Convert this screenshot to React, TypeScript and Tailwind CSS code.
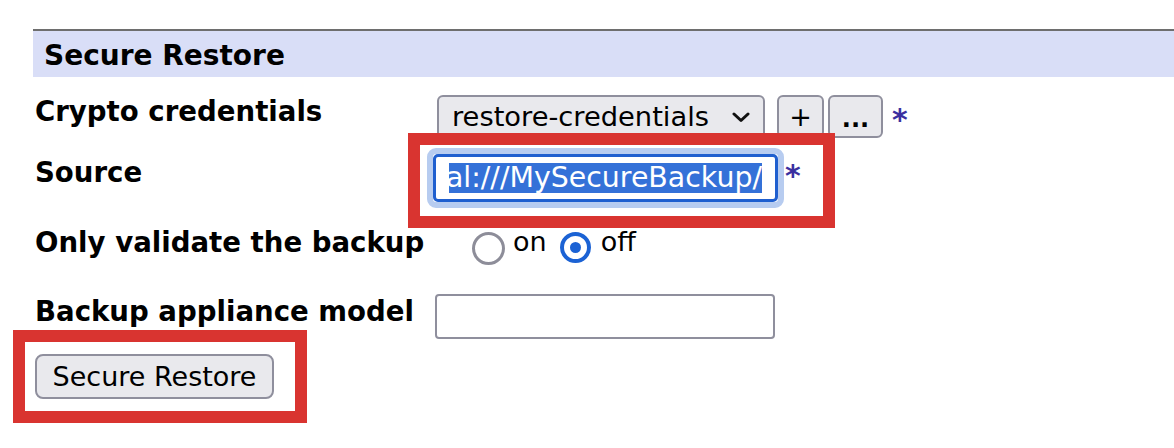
import React from "react";

function Chevron() {
  return (
    <svg width="18" height="11" viewBox="0 0 18 11" fill="none">
      <path d="M2 2 L9 8.5 L16 2" stroke="#111" strokeWidth="3" strokeLinecap="round" strokeLinejoin="round" />
    </svg>
  );
}

export default function App() {
  return (
    <div className="relative w-[1174px] h-[448px] overflow-hidden bg-white font-['DejaVu_Sans',sans-serif] text-black">
      <div className="pt-[29px] pl-[33px]">
        {/* Section header */}
        <div className="border-t-2 border-[#6e6e6e] bg-[#d9def7] h-[48px] pl-[11px] pt-[11px]">
          <span className="block font-bold text-[28px] leading-[28px]">Secure Restore</span>
        </div>

        <div className="pl-[2px]">
          {/* Row 1: Crypto credentials */}
          <div className="mt-[18px] flex h-[44px]">
            <div className="w-[402px] shrink-0 pt-[3px] font-bold text-[27.6px] leading-[27px]">Crypto credentials</div>
            <div className="flex">
              <div className="flex h-[44px] w-[328px] items-center justify-between rounded-[6px] border-2 border-[#8f8f9d] bg-[#e9e9ed] pl-[13px] pr-[13px]">
                <span className="text-[27.3px] leading-[30px]">restore-credentials</span>
                <Chevron />
              </div>
              <div className="ml-[12px] flex h-[43px] w-[47px] items-center justify-center rounded-[6px] border-2 border-[#8f8f9d] bg-[#e9e9ed] text-[27px] leading-none">+</div>
              <div className="ml-[4px] flex h-[43px] w-[55px] items-center justify-center rounded-[6px] border-2 border-[#8f8f9d] bg-[#e9e9ed] pt-[4px] font-bold text-[24px] leading-none">...</div>
              <span className="ml-[9px] mt-[10px] font-bold text-[30px] leading-[30px] text-[#3a2f9f]">*</span>
            </div>
          </div>

          {/* Row 2: Source */}
          <div className="mt-[9px] flex h-[60px]">
            <div className="w-[392px] shrink-0 pt-[11px] font-bold text-[27.6px] leading-[27px]">Source</div>
            <div className="flex">
              <div className="rounded-[9px] border-[6px] border-[#b7ccf0]">
                <div className="flex h-[48px] w-[345px] items-center rounded-[5px] border-[3px] border-[#1f5fcf] bg-white px-[13px]">
                  <div className="flex w-[313px] justify-end overflow-hidden whitespace-nowrap">
                    <span className="bg-[#3471d8] text-[28.4px] leading-[30px] text-white">local:///MySecureBackup/</span>
                  </div>
                </div>
              </div>
              <span className="ml-[1px] mt-[13px] font-bold text-[30px] leading-[30px] text-[#3a2f9f]">*</span>
            </div>
          </div>

          {/* Row 3: Only validate */}
          <div className="mt-[21px] flex h-[36px]">
            <div className="w-[437px] shrink-0 pt-[0px] font-bold text-[27.6px] leading-[27px]">Only validate the backup</div>
            <div className="flex items-start">
              <div className="mt-[3px] h-[33px] w-[33px] rounded-full border-[3px] border-[#8d8d99] bg-white" />
              <span className="ml-[8px] text-[27px] leading-[27px] -mt-[1px]">on</span>
              <div className="ml-[13px] mt-[3px] flex h-[31px] w-[31px] items-center justify-center rounded-full border-[4px] border-[#1b62d4] bg-white">
                <div className="h-[11px] w-[11px] rounded-full bg-[#1b62d4]" />
              </div>
              <span className="ml-[10px] text-[27px] leading-[27px] -mt-[1px]">off</span>
            </div>
          </div>

          {/* Row 4: Backup appliance model */}
          <div className="mt-[29px] flex h-[45px]">
            <div className="w-[400px] shrink-0 pt-[4px] font-bold text-[27.6px] leading-[27px]">Backup appliance model</div>
            <div className="h-[45px] w-[340px] rounded-[4px] border-2 border-[#8f8f9d] bg-white" />
          </div>

          {/* Button */}
          <div className="mt-[15px] flex h-[45px] w-[239px] items-center justify-center rounded-[8px] border-2 border-[#8f8f9d] bg-[#e9e9ed] text-[27px] leading-[30px]">
            Secure Restore
          </div>
        </div>
      </div>

      {/* Annotation boxes */}
      <div className="absolute left-[408px] top-[133px] h-[95px] w-[427px] border-[12px] border-[#d93430]" />
      <div className="absolute left-[13px] top-[330px] h-[93px] w-[294px] border-[12px] border-[#d93430]" />
    </div>
  );
}
